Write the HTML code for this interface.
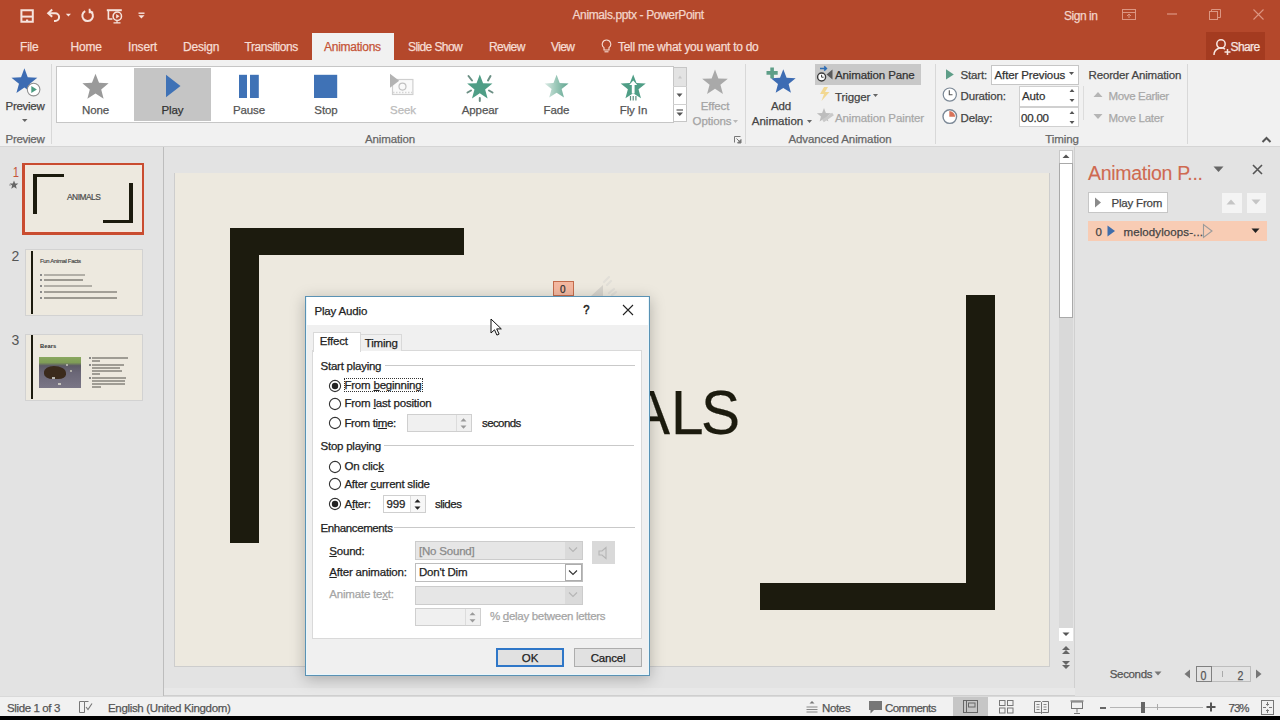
<!DOCTYPE html>
<html><head><meta charset="utf-8">
<style>
*{margin:0;padding:0;box-sizing:border-box}
html,body{width:1280px;height:720px;overflow:hidden;background:#e3e3e3;font-family:"Liberation Sans",sans-serif;position:relative}
.a{position:absolute;display:block}
.t{position:absolute;white-space:nowrap;line-height:1;-webkit-text-stroke:0.25px currentColor}
</style></head><body>
<div class="a" style="left:0px;top:0px;width:1280px;height:60px;background:#b4482b;"></div>
<svg class="a" style="left:19px;top:8px;" width="17" height="16" viewBox="0 0 17 16"><path d="M2.4 2.2h11.4v11.6h-11.4z" fill="none" stroke="#f6e3dd" stroke-width="2"/><path d="M2.4 8.6h11.4" stroke="#f6e3dd" stroke-width="2"/><path d="M7 11.5h2.2v2.3h-2.2z" fill="#f6e3dd"/></svg>
<svg class="a" style="left:46px;top:8px;" width="16" height="15" viewBox="0 0 16 15"><path d="M3 5.2h6.2a3.9 3.9 0 0 1 0 7.8h-1.2" fill="none" stroke="#f6e3dd" stroke-width="2"/><path d="M6.2 1.6l-4 3.6 4 3.6" fill="none" stroke="#f6e3dd" stroke-width="2"/></svg>
<svg class="a" style="left:65px;top:13px;" width="7" height="4" viewBox="0 0 7 4"><path d="M0.8 0.8h5.2l-2.6 2.8z" fill="#f6e3dd"/></svg>
<svg class="a" style="left:80px;top:8px;" width="15" height="15" viewBox="0 0 15 15"><path d="M5.2 3.1a5.3 5.3 0 1 0 4.4 -0.2" fill="none" stroke="#f6e3dd" stroke-width="2"/><path d="M9.6 0.8v3.6h3.6" fill="none" stroke="#f6e3dd" stroke-width="1.8"/></svg>
<svg class="a" style="left:106px;top:8px;" width="17" height="16" viewBox="0 0 17 16"><path d="M0.8 2.2h15" stroke="#f6e3dd" stroke-width="2"/><path d="M2.4 3v8h4" fill="none" stroke="#f6e3dd" stroke-width="1.6"/><circle cx="11.3" cy="8.2" r="4.2" fill="none" stroke="#f6e3dd" stroke-width="1.5"/><path d="M10.2 6v4.4l3.3-2.2z" fill="#f6e3dd"/><path d="M7.5 14.8h7M11 12.5v2" stroke="#f6e3dd" stroke-width="1.2"/></svg>
<svg class="a" style="left:138px;top:12px;" width="7" height="8" viewBox="0 0 7 8"><path d="M0.5 1.2h6" stroke="#f6e3dd" stroke-width="1.4"/><path d="M0.3 3.2h6.2l-3.1 3.2z" fill="#f6e3dd"/></svg>
<div class="t " style="left:572.5px;top:9.44px;font-size:12px;color:#f3d5ca;letter-spacing:-0.38px;">Animals.pptx - PowerPoint</div>
<div class="t " style="left:1064px;top:9.54px;font-size:12px;color:#f3d5ca;letter-spacing:-0.45px;">Sign in</div>
<svg class="a" style="left:1122px;top:9px;" width="14" height="11" viewBox="0 0 14 11"><rect x="0.5" y="0.5" width="13" height="10" fill="none" stroke="#dc9682"/><path d="M0.5 3.5h13" stroke="#dc9682"/><path d="M7 9V5M5 7l2-2 2 2" fill="none" stroke="#dc9682"/></svg>
<svg class="a" style="left:1167px;top:13px;" width="10" height="2" viewBox="0 0 10 2"><path d="M0 1h10" stroke="#dc9682" stroke-width="1.2"/></svg>
<svg class="a" style="left:1209px;top:9px;" width="12" height="11" viewBox="0 0 12 11"><rect x="0.5" y="2.5" width="8" height="8" fill="none" stroke="#dc9682"/><path d="M2.5 2.5v-2h9v8h-3" fill="none" stroke="#dc9682"/></svg>
<svg class="a" style="left:1253px;top:9px;" width="11" height="11" viewBox="0 0 11 11"><path d="M0.5 0.5l10 10M10.5 0.5l-10 10" stroke="#dc9682" stroke-width="1.1"/></svg>
<div class="t " style="left:20px;top:41.44px;font-size:12px;color:#f6ddd4;letter-spacing:-0.2px;">File</div>
<div class="t " style="left:70.5px;top:41.44px;font-size:12px;color:#f6ddd4;letter-spacing:-0.2px;">Home</div>
<div class="t " style="left:128px;top:41.44px;font-size:12px;color:#f6ddd4;letter-spacing:-0.2px;">Insert</div>
<div class="t " style="left:183px;top:41.44px;font-size:12px;color:#f6ddd4;letter-spacing:-0.2px;">Design</div>
<div class="t " style="left:244.5px;top:41.44px;font-size:12px;color:#f6ddd4;letter-spacing:-0.45px;">Transitions</div>
<div class="a" style="left:312px;top:33px;width:82px;height:28px;background:#f1f1f1;"></div>
<div class="t " style="left:324px;top:41.44px;font-size:12px;color:#c55336;letter-spacing:-0.25px;">Animations</div>
<div class="t " style="left:408px;top:41.44px;font-size:12px;color:#f6ddd4;letter-spacing:-0.6px;">Slide Show</div>
<div class="t " style="left:489px;top:41.44px;font-size:12px;color:#f6ddd4;letter-spacing:-0.6px;">Review</div>
<div class="t " style="left:551px;top:41.44px;font-size:12px;color:#f6ddd4;letter-spacing:-0.6px;">View</div>
<svg class="a" style="left:601px;top:39px;" width="11" height="14" viewBox="0 0 11 14"><path d="M5.5 1a4.2 4.2 0 0 0 -2.5 7.6v2.4h5v-2.4a4.2 4.2 0 0 0 -2.5 -7.6z" fill="none" stroke="#f6ddd4" stroke-width="1.1"/><path d="M3.5 12.8h4" stroke="#f6ddd4" stroke-width="1.1"/></svg>
<div class="t " style="left:618px;top:41.44px;font-size:12px;color:#f6ddd4;letter-spacing:-0.28px;">Tell me what you want to do</div>
<div class="a" style="left:1206px;top:32px;width:59px;height:28px;background:#a43b20;"></div>
<svg class="a" style="left:1213px;top:38px;" width="19" height="18" viewBox="0 0 19 18"><circle cx="8" cy="6" r="4.2" fill="none" stroke="#f7e6e0" stroke-width="1.5"/><path d="M1 17a7 7 0 0 1 11-5.8" fill="none" stroke="#f7e6e0" stroke-width="1.5"/><path d="M14.5 11v6M11.5 14h6" stroke="#f7e6e0" stroke-width="1.5"/></svg>
<div class="t " style="left:1230.5px;top:41.44px;font-size:12px;color:#f7e6e0;letter-spacing:-0.6px;">Share</div>
<div class="a" style="left:0px;top:60px;width:1280px;height:87px;background:#f1f1f1;"></div>
<div class="a" style="left:0px;top:146px;width:1280px;height:1px;background:#d5d5d5;"></div>
<div class="a" style="left:51px;top:64px;width:1px;height:80px;background:#d8d8d8;"></div>
<div class="a" style="left:745px;top:64px;width:1px;height:80px;background:#d8d8d8;"></div>
<div class="a" style="left:935px;top:64px;width:1px;height:80px;background:#d8d8d8;"></div>
<div class="a" style="left:1187px;top:64px;width:1px;height:80px;background:#d8d8d8;"></div>
<div class="a" style="left:1083px;top:86px;width:1px;height:34px;background:#dcdcdc;"></div>
<svg class="a" style="left:8px;top:66px;" width="45" height="34" viewBox="0 0 45 34"><polygon points="16.40,2.30 19.75,11.29 29.33,11.70 21.82,17.66 24.39,26.90 16.40,21.60 8.41,26.90 10.98,17.66 3.47,11.70 13.05,11.29" fill="#3d6cb3"/><circle cx="25.6" cy="23.599999999999994" r="6.3" fill="#fff" stroke="#8f8f8f" stroke-width="1.1"/><path d="M23.3 20.099999999999994v7l5.6-3.5z" fill="#4b9b80"/></svg>
<div class="t" style="left:-75px;width:200px;text-align:center;top:101.47px;font-size:11.5px;color:#444;letter-spacing:-0.3px;">Preview</div>
<svg class="a" style="left:22px;top:119px;" width="6" height="4" viewBox="0 0 6 4"><path d="M0 0h5.5l-2.75 3z" fill="#666"/></svg>
<div class="t" style="left:-75px;width:200px;text-align:center;top:133.97px;font-size:11.5px;color:#666;letter-spacing:-0.3px;">Preview</div>
<div class="a" style="left:56px;top:66px;width:618px;height:57px;background:#fff;border:1px solid #c6c6c6;border-right:none"></div>
<div class="a" style="left:134px;top:68px;width:77px;height:53px;background:#c5c5c5;"></div>
<div class="t" style="left:-4.5px;width:200px;text-align:center;top:105.27px;font-size:11.5px;color:#555;letter-spacing:-0.1px;">None</div>
<div class="t" style="left:72.5px;width:200px;text-align:center;top:105.27px;font-size:11.5px;color:#333;letter-spacing:-0.1px;">Play</div>
<div class="t" style="left:149px;width:200px;text-align:center;top:105.27px;font-size:11.5px;color:#555;letter-spacing:-0.1px;">Pause</div>
<div class="t" style="left:226px;width:200px;text-align:center;top:105.27px;font-size:11.5px;color:#555;letter-spacing:-0.1px;">Stop</div>
<div class="t" style="left:303px;width:200px;text-align:center;top:105.27px;font-size:11.5px;color:#bbb;letter-spacing:-0.1px;">Seek</div>
<div class="t" style="left:380px;width:200px;text-align:center;top:105.27px;font-size:11.5px;color:#555;letter-spacing:-0.1px;">Appear</div>
<div class="t" style="left:456.5px;width:200px;text-align:center;top:105.27px;font-size:11.5px;color:#555;letter-spacing:-0.1px;">Fade</div>
<div class="t" style="left:533.5px;width:200px;text-align:center;top:105.27px;font-size:11.5px;color:#555;letter-spacing:-0.1px;">Fly In</div>
<svg class="a" style="left:80px;top:72px;" width="32" height="30" viewBox="0 0 32 30"><polygon points="15.50,1.80 19.03,10.75 28.62,11.34 21.21,17.45 23.61,26.76 15.50,21.60 7.39,26.76 9.79,17.45 2.38,11.34 11.97,10.75" fill="#9a9a9a"/></svg>
<svg class="a" style="left:162px;top:72px;" width="20" height="30" viewBox="0 0 20 30"><path d="M4 2.8v22.5l14.5-11.25z" fill="#3f72b6"/></svg>
<svg class="a" style="left:237px;top:73px;" width="24" height="27" viewBox="0 0 24 27"><rect x="2" y="1.8" width="8" height="23.2" fill="#3f72b6"/><rect x="13" y="1.8" width="8.8" height="23.2" fill="#3f72b6"/></svg>
<svg class="a" style="left:312px;top:73px;" width="28" height="27" viewBox="0 0 28 27"><rect x="2" y="1.8" width="23.2" height="23.2" fill="#3f72b6"/></svg>
<svg class="a" style="left:388px;top:72px;" width="28" height="25" viewBox="0 0 28 25"><rect x="4.5" y="7.5" width="20.4" height="15" fill="#fafafa" stroke="#cfcfcf" stroke-width="1.2"/><circle cx="14.5" cy="14.6" r="3.5" fill="none" stroke="#c2c2c2" stroke-width="1.2"/><path d="M5 20.5h19" stroke="#d5d5d5" stroke-width="1.5" stroke-dasharray="1.5 1.5"/><path d="M2 1.7v14.1l9.2-7z" fill="#b3b3b3"/></svg>
<svg class="a" style="left:462px;top:71px;" width="36" height="32" viewBox="0 0 36 32"><polygon points="17.80,3.40 21.09,12.17 30.45,12.59 23.13,18.43 25.62,27.46 17.80,22.30 9.98,27.46 12.47,18.43 5.15,12.59 14.51,12.17" fill="#4f9e86"/><g stroke="#6b8f84" stroke-width="2" stroke-linecap="round"><path d="M6.5 5l3.5 4.5M28.5 5l-2.5 4.5M5.5 21.5l3.5-2M30.5 21.5l-3.5-2M17.8 27v3"/></g></svg>
<svg class="a" style="left:540px;top:71px" width="34" height="31" viewBox="0 0 34 31"><defs><linearGradient id="fg" x1="0" x2="1" y1="0" y2="0"><stop offset="0" stop-color="#dbeae5"/><stop offset="0.45" stop-color="#9fcabb"/><stop offset="1" stop-color="#5ea48f"/></linearGradient></defs><polygon points="16.60,3.80 19.72,12.11 28.58,12.51 21.64,18.04 24.01,26.59 16.60,21.70 9.19,26.59 11.56,18.04 4.62,12.51 13.48,12.11" fill="url(#fg)"/></svg>
<svg class="a" style="left:617px;top:71px;" width="32" height="32" viewBox="0 0 32 32"><polygon points="16.20,3.40 19.49,12.07 28.75,12.52 21.53,18.33 23.96,27.28 16.20,22.20 8.44,27.28 10.87,18.33 3.65,12.52 12.91,12.07" fill="#4f9e86"/><path d="M16.2 9.5l-4 4.5h2.6v8.5h2.8v-8.5h2.6z" fill="#fff"/><g stroke="#5d8f80" stroke-width="1.2"><path d="M13.5 25v4.5M16.2 25v4.5M18.9 25v4.5"/></g></svg>
<div class="a" style="left:673px;top:67px;width:14px;height:55px;background:#fff;border:1px solid #c6c6c6"></div>
<div class="a" style="left:674px;top:68px;width:12px;height:18px;background:#e3e3e3;"></div>
<div class="a" style="left:673px;top:86px;width:14px;height:1px;background:#d0d0d0;"></div>
<div class="a" style="left:673px;top:104px;width:14px;height:1px;background:#d0d0d0;"></div>
<svg class="a" style="left:676px;top:93px;" width="8" height="5" viewBox="0 0 8 5"><path d="M0.5 0.5h6l-3 3.5z" fill="#555"/></svg>
<svg class="a" style="left:676px;top:109px;" width="8" height="8" viewBox="0 0 8 8"><path d="M0.5 1h6.5" stroke="#555" stroke-width="1.2"/><path d="M0.5 3.5h6.5l-3.25 3.5z" fill="#555"/></svg>
<svg class="a" style="left:678px;top:75px;" width="5" height="4" viewBox="0 0 5 4"><path d="M0 3.5h4l-2-3z" fill="#c8c8c8"/></svg>
<div class="t" style="left:290px;width:200px;text-align:center;top:134.27px;font-size:11.5px;color:#666;letter-spacing:-0.1px;">Animation</div>
<svg class="a" style="left:734px;top:136px;" width="8" height="8" viewBox="0 0 8 8"><path d="M0.5 6.5v-6h6" fill="none" stroke="#777"/><path d="M2.5 2.5l4.5 4.5M7 3.5v3.5h-3.5z" stroke="#777" fill="#777" stroke-width="1"/></svg>
<svg class="a" style="left:700px;top:68px;" width="30" height="28" viewBox="0 0 30 28"><polygon points="15.00,1.50 18.35,10.39 27.84,10.83 20.42,16.76 22.94,25.92 15.00,20.70 7.06,25.92 9.58,16.76 2.16,10.83 11.65,10.39" fill="#a9a9a9"/></svg>
<div class="t" style="left:615px;width:200px;text-align:center;top:101.27px;font-size:11.5px;color:#a3a3a3;letter-spacing:-0.1px;">Effect</div>
<div class="t" style="left:612px;width:200px;text-align:center;top:116.27px;font-size:11.5px;color:#a3a3a3;letter-spacing:-0.1px;">Options</div>
<svg class="a" style="left:733px;top:120px;" width="6" height="4" viewBox="0 0 6 4"><path d="M0 0h5l-2.5 3z" fill="#b9b9b9"/></svg>
<svg class="a" style="left:764px;top:66px;" width="34" height="30" viewBox="0 0 34 30"><polygon points="19.30,3.30 22.59,11.77 31.66,12.28 24.63,18.03 26.94,26.82 19.30,21.90 11.66,26.82 13.97,18.03 6.94,12.28 16.01,11.77" fill="#3d6cb3"/><path d="M8.100000000000023 1.5v10.8M2.5 6.900000000000006h11.2" stroke="#5e9e88" stroke-width="3.6"/></svg>
<div class="t" style="left:681px;width:200px;text-align:center;top:101.27px;font-size:11.5px;color:#444;letter-spacing:-0.1px;">Add</div>
<div class="t" style="left:677.5px;width:200px;text-align:center;top:116.27px;font-size:11.5px;color:#444;letter-spacing:0.05px;">Animation</div>
<svg class="a" style="left:807px;top:120px;" width="6" height="4" viewBox="0 0 6 4"><path d="M0 0h5l-2.5 3z" fill="#666"/></svg>
<div class="a" style="left:815px;top:64px;width:106px;height:21px;background:#c8c8c8;"></div>
<svg class="a" style="left:815px;top:64px;" width="20" height="20" viewBox="0 0 20 20"><path d="M5 4.5h6M9.2 2.4l2.2 2.1-2.2 2.1" fill="none" stroke="#2e6db4" stroke-width="1.5"/><circle cx="6.6" cy="13" r="4" fill="#fff" stroke="#3a3a3a" stroke-width="1.4"/><path d="M6.6 10.8v2.4h2" fill="none" stroke="#3a3a3a" stroke-width="1"/><path d="M17.5 5.5v10l-6-5z" fill="#5a5a5a"/></svg>
<div class="t " style="left:835px;top:69.77px;font-size:11.5px;color:#333;letter-spacing:-0.12px;">Animation Pane</div>
<svg class="a" style="left:818px;top:86px;" width="14" height="16" viewBox="0 0 14 16"><path d="M6 1l-4 7h4l-2.5 7 8-9h-4.5l3-5z" fill="#f2d27a" opacity="0.8"/></svg>
<div class="t " style="left:835px;top:91.77px;font-size:11.5px;color:#444;letter-spacing:-0.1px;">Trigger</div>
<svg class="a" style="left:873px;top:94px;" width="6" height="4" viewBox="0 0 6 4"><path d="M0 0h5l-2.5 3z" fill="#666"/></svg>
<svg class="a" style="left:816px;top:107px;" width="18" height="17" viewBox="0 0 18 17"><polygon points="8.00,1.00 9.88,5.91 15.13,6.18 11.04,9.49 12.41,14.57 8.00,11.70 3.59,14.57 4.96,9.49 0.87,6.18 6.12,5.91" fill="#bdbdbd"/><path d="M7 14l10-7" stroke="#c9c9c9" stroke-width="3"/></svg>
<div class="t " style="left:835px;top:112.97px;font-size:11.5px;color:#a8a8a8;letter-spacing:-0.1px;">Animation Painter</div>
<div class="t" style="left:740px;width:200px;text-align:center;top:134.27px;font-size:11.5px;color:#666;letter-spacing:-0.1px;">Advanced Animation</div>
<svg class="a" style="left:944px;top:68px;" width="12" height="13" viewBox="0 0 12 13"><path d="M2 1.2v10.4l7.8-5.2z" fill="#5e9e88"/></svg>
<div class="t " style="left:960.5px;top:69.77px;font-size:11.5px;color:#444;letter-spacing:-0.15px;">Start:</div>
<div class="a" style="left:991px;top:64.5px;width:88px;height:20px;background:#fff;border:1px solid #c6c6c6"></div>
<div class="t " style="left:994.5px;top:69.77px;font-size:11.5px;color:#333;letter-spacing:-0.12px;">After Previous</div>
<svg class="a" style="left:1069px;top:72px;" width="6" height="4" viewBox="0 0 6 4"><path d="M0 0h5l-2.5 3z" fill="#555"/></svg>
<svg class="a" style="left:941px;top:86px;" width="18" height="18" viewBox="0 0 18 18"><circle cx="8.8" cy="8.6" r="6.6" fill="#fff" stroke="#7b8896" stroke-width="1.2"/><path d="M8.3 4.2v4.6h3.2" fill="none" stroke="#555" stroke-width="1.1"/></svg>
<div class="t " style="left:960.5px;top:90.67px;font-size:11.5px;color:#444;letter-spacing:-0.15px;">Duration:</div>
<div class="a" style="left:1019px;top:85.5px;width:60px;height:21.5px;background:#fff;border:1px solid #d0d0d0"></div>
<div class="t " style="left:1022px;top:90.67px;font-size:11.5px;color:#333;letter-spacing:-0.1px;">Auto</div>
<svg class="a" style="left:1069px;top:88px;" width="7" height="16" viewBox="0 0 7 16"><path d="M0.5 4h5l-2.5-3z M0.5 11h5l-2.5 3z" fill="#555"/></svg>
<svg class="a" style="left:941px;top:108px;" width="18" height="18" viewBox="0 0 18 18"><circle cx="8.8" cy="8.6" r="6.8" fill="#fff" stroke="#7b8896" stroke-width="1.4"/><path d="M8.3 3v5.8h5.8a5.8 5.8 0 0 0 -5.8 -5.8z" fill="#d8735a"/></svg>
<div class="t " style="left:960.5px;top:112.77px;font-size:11.5px;color:#444;letter-spacing:-0.15px;">Delay:</div>
<div class="a" style="left:1019px;top:106.5px;width:60px;height:20.5px;background:#fff;border:1px solid #d0d0d0"></div>
<div class="t " style="left:1021px;top:112.77px;font-size:11.5px;color:#333;letter-spacing:-0.2px;">00.00</div>
<svg class="a" style="left:1069px;top:110px;" width="7" height="16" viewBox="0 0 7 16"><path d="M0.5 4h5l-2.5-3z M0.5 11h5l-2.5 3z" fill="#555"/></svg>
<div class="t" style="left:962px;width:200px;text-align:center;top:133.77px;font-size:11.5px;color:#666;letter-spacing:-0.1px;">Timing</div>
<div class="t " style="left:1088.5px;top:69.87px;font-size:11.5px;color:#444;letter-spacing:-0.15px;">Reorder Animation</div>
<svg class="a" style="left:1093px;top:91px;" width="10" height="7" viewBox="0 0 10 7"><path d="M0.5 6h9l-4.5-5z" fill="#b5b5b5"/></svg>
<div class="t " style="left:1108.5px;top:91.07px;font-size:11.5px;color:#a8a8a8;letter-spacing:-0.35px;">Move Earlier</div>
<svg class="a" style="left:1093px;top:113px;" width="10" height="7" viewBox="0 0 10 7"><path d="M0.5 1h9l-4.5 5z" fill="#b5b5b5"/></svg>
<div class="t " style="left:1108.5px;top:112.57px;font-size:11.5px;color:#a8a8a8;letter-spacing:-0.25px;">Move Later</div>
<svg class="a" style="left:1261px;top:135px;" width="11" height="9" viewBox="0 0 11 9"><path d="M1.5 7l4-4 4 4" fill="none" stroke="#555" stroke-width="2"/></svg>
<div class="a" style="left:0px;top:147px;width:1280px;height:550px;background:#e3e3e3;"></div>
<div class="a" style="left:163px;top:147px;width:1px;height:550px;background:#bdbdbd;"></div>
<div class="a" style="left:164px;top:688px;width:911px;height:8px;background:#e8e8e8;border-bottom:1px solid #cfcfcf"></div>
<div class="a" style="left:1074px;top:147px;width:1px;height:541px;background:#d0d0d0;"></div>
<div class="a" style="left:174px;top:173px;width:876px;height:494px;background:#cdcdcd;"></div>
<div class="a" style="left:175px;top:173px;width:874px;height:493px;background:#ede9df;"></div>
<div class="a" style="left:229.7px;top:227.6px;width:234px;height:27px;background:#1c1b0e;"></div>
<div class="a" style="left:229.7px;top:227.6px;width:28.9px;height:315.3px;background:#1c1b0e;"></div>
<div class="a" style="left:965.6px;top:295.1px;width:29.3px;height:315.3px;background:#1c1b0e;"></div>
<div class="a" style="left:759.8px;top:583px;width:235.1px;height:27.4px;background:#1c1b0e;"></div>
<div class="t" style="left:630.7px;top:381px;font-size:63px;color:#1c1b0e;transform:scaleX(0.93);transform-origin:0 0">A</div>
<div class="t" style="left:671px;top:381px;font-size:63px;color:#1c1b0e;transform:scaleX(0.93);transform-origin:0 0">L</div>
<div class="t" style="left:700.8px;top:381px;font-size:63px;color:#1c1b0e;transform:scaleX(0.93);transform-origin:0 0">S</div>
<div class="a" style="left:553px;top:281px;width:21px;height:15px;background:#f4b8a0;border:1px solid #c46c4c"></div>
<div class="t " style="left:560px;top:284.54px;font-size:10px;color:#333;">0</div>
<svg class="a" style="left:588px;top:276px;" width="38" height="21" viewBox="0 0 38 21"><path d="M3 20l12-11v11z" fill="#d6d3cc"/><path d="M16 6l5-5M19 9l4-4M21 17l5-4M24 19l4-3" stroke="#e2dfd8" stroke-width="2.2" stroke-linecap="round"/></svg>
<div class="a" style="left:1059px;top:150px;width:14px;height:14px;background:#fff;border:1px solid #c8c8c8"></div>
<svg class="a" style="left:1062px;top:154px;" width="8" height="5" viewBox="0 0 8 5"><path d="M0.5 4h7l-3.5-3.5z" fill="#555"/></svg>
<div class="a" style="left:1059px;top:164px;width:14px;height:465px;background:#d9d9d9;"></div>
<div class="a" style="left:1059px;top:163px;width:14px;height:155px;background:#fff;border:1px solid #a9a9a9"></div>
<div class="a" style="left:1059px;top:628px;width:14px;height:13px;background:#fff;"></div>
<svg class="a" style="left:1062px;top:632px;" width="8" height="5" viewBox="0 0 8 5"><path d="M0.5 0.5h7l-3.5 3.5z" fill="#555"/></svg>
<svg class="a" style="left:1061px;top:645px;" width="10" height="10" viewBox="0 0 10 10"><path d="M1 5l4-4 4 4zM1 9l4-4 4 4z" fill="#666"/></svg>
<svg class="a" style="left:1061px;top:660px;" width="10" height="10" viewBox="0 0 10 10"><path d="M1 1l4 4 4-4zM1 5l4 4 4-4z" fill="#666"/></svg>
<div class="t " style="left:12px;top:164.75px;font-size:14px;color:#c5533a;transform:scaleX(0.8);-webkit-text-stroke:0">1</div>
<svg class="a" style="left:9px;top:180px;" width="10" height="10" viewBox="0 0 10 10"><polygon points="5.00,0.40 6.18,3.38 9.37,3.58 6.90,5.62 7.70,8.72 5.00,7.00 2.30,8.72 3.10,5.62 0.63,3.58 3.82,3.38" fill="#666"/><path d="M0 5h2" stroke="#999"/></svg>
<div class="a" style="left:22px;top:162.5px;width:122px;height:72px;background:#c94c30;"></div>
<div class="a" style="left:24.5px;top:165px;width:117px;height:67px;background:#ede9df;border:1px solid #f7e5dc"></div>
<div class="a" style="left:33px;top:173.8px;width:30.8px;height:3.5px;background:#1c1b0e;"></div>
<div class="a" style="left:33px;top:173.8px;width:4.3px;height:40.2px;background:#1c1b0e;"></div>
<div class="a" style="left:103px;top:219.8px;width:30px;height:3.3px;background:#1c1b0e;"></div>
<div class="a" style="left:129px;top:182.5px;width:4px;height:40.5px;background:#1c1b0e;"></div>
<div class="t " style="left:67px;top:193.49px;font-size:8.4px;color:#4a4a4a;letter-spacing:-0.5px;-webkit-text-stroke:0.2px #4a4a4a">ANIMALS</div>
<div class="t " style="left:11.5px;top:248.65px;font-size:14px;color:#555;-webkit-text-stroke:0">2</div>
<div class="a" style="left:24.5px;top:249.3px;width:118px;height:66.5px;background:#d2d2d2;"></div>
<div class="a" style="left:25.5px;top:250.3px;width:116px;height:64.5px;background:#ede9df;"></div>
<div class="a" style="left:30.6px;top:251px;width:2.2px;height:63.4px;background:#1c1b0e;"></div>
<div class="t " style="left:40px;top:257.92px;font-size:6px;color:#444;letter-spacing:-0.35px;-webkit-text-stroke:0.15px #444">Fun Animal Facts</div>
<div class="a" style="left:40px;top:274px;width:2px;height:2px;background:#8a8a8a;"></div>
<div class="a" style="left:43.5px;top:274px;width:41.5px;height:2px;background:#b2afa7;"></div>
<div class="a" style="left:40px;top:279px;width:2px;height:2px;background:#8a8a8a;"></div>
<div class="a" style="left:43.5px;top:279px;width:39.5px;height:2px;background:#9c9991;"></div>
<div class="a" style="left:40px;top:285px;width:2px;height:2px;background:#8a8a8a;"></div>
<div class="a" style="left:43.5px;top:285px;width:48.5px;height:2px;background:#b2afa7;"></div>
<div class="a" style="left:40px;top:291px;width:2px;height:2px;background:#8a8a8a;"></div>
<div class="a" style="left:43.5px;top:291px;width:73.5px;height:2px;background:#a29f97;"></div>
<div class="a" style="left:40px;top:297px;width:2px;height:2px;background:#8a8a8a;"></div>
<div class="a" style="left:43.5px;top:297px;width:73.5px;height:2px;background:#9c9991;"></div>
<div class="t " style="left:11.5px;top:333.15px;font-size:14px;color:#555;-webkit-text-stroke:0">3</div>
<div class="a" style="left:24.5px;top:333.5px;width:118px;height:67px;background:#d2d2d2;"></div>
<div class="a" style="left:25.5px;top:334.5px;width:116px;height:65px;background:#ede9df;"></div>
<div class="a" style="left:30.6px;top:335px;width:2.2px;height:63.8px;background:#1c1b0e;"></div>
<div class="t " style="left:40px;top:343.59px;font-size:5.8px;color:#333;font-weight:bold;-webkit-text-stroke:0">Bears</div>
<div class="a" style="left:38.8px;top:357px;width:41.8px;height:31px;background:linear-gradient(180deg,#8aa860 0%,#7f9c56 18%,#5d5a66 28%,#6a6676 50%,#7a7686 100%)"></div>
<div class="a" style="left:44px;top:366px;width:22px;height:13px;background:#3b2a1c;border-radius:45% 55% 35% 40%"></div>
<div class="a" style="left:52px;top:377px;width:3px;height:2px;background:#b8b6b0;"></div>
<div class="a" style="left:58px;top:383px;width:3px;height:2px;background:#c6c4be;"></div>
<div class="a" style="left:70px;top:370px;width:2px;height:2px;background:#b0aea8;"></div>
<div class="a" style="left:66px;top:364px;width:2px;height:2px;background:#b0aea8;"></div>
<div class="a" style="left:89px;top:357px;width:2px;height:2px;background:#888;"></div>
<div class="a" style="left:89px;top:364px;width:2px;height:2px;background:#888;"></div>
<div class="a" style="left:89px;top:377px;width:2px;height:2px;background:#888;"></div>
<div class="a" style="left:92px;top:357px;width:36px;height:2px;background:#9f9c94;"></div>
<div class="a" style="left:92px;top:360px;width:8px;height:2px;background:#9f9c94;"></div>
<div class="a" style="left:92px;top:364px;width:32px;height:2px;background:#9f9c94;"></div>
<div class="a" style="left:92px;top:367px;width:28px;height:2px;background:#9f9c94;"></div>
<div class="a" style="left:92px;top:370px;width:30px;height:2px;background:#9f9c94;"></div>
<div class="a" style="left:92px;top:373px;width:8px;height:2px;background:#9f9c94;"></div>
<div class="a" style="left:92px;top:377px;width:34px;height:2px;background:#9f9c94;"></div>
<div class="a" style="left:92px;top:380px;width:33px;height:2px;background:#9f9c94;"></div>
<div class="a" style="left:92px;top:383px;width:33px;height:2px;background:#9f9c94;"></div>
<div class="a" style="left:92px;top:386px;width:9px;height:2px;background:#9f9c94;"></div>
<div class="a" style="left:305px;top:296px;width:345px;height:380px;background:#f0f0f0;border:1px solid #5a92b4;box-shadow:0 3px 14px rgba(0,0,0,0.25),inset 0 0 0 1px #e8f6fc"></div>
<div class="a" style="left:307px;top:297px;width:341px;height:28px;background:#fff;"></div>
<div class="t " style="left:314.4px;top:305.67px;font-size:11.5px;color:#222;letter-spacing:-0.15px;">Play Audio</div>
<div class="t " style="left:583.3px;top:303.62px;font-size:12.5px;color:#222;transform:scaleX(0.9);-webkit-text-stroke:0.5px #222">?</div>
<svg class="a" style="left:622px;top:304px;" width="12" height="12" viewBox="0 0 12 12"><path d="M1 1l10 10M11 1l-10 10" stroke="#222" stroke-width="1.1"/></svg>
<div class="a" style="left:312px;top:350px;width:330px;height:289px;background:#fff;border:1px solid #d9d9d9"></div>
<div class="a" style="left:360px;top:333.5px;width:41.5px;height:17.5px;background:#f0f0f0;border:1px solid #d9d9d9;border-bottom:none"></div>
<div class="a" style="left:312.5px;top:331.5px;width:48px;height:20px;background:#fff;border:1px solid #d9d9d9;border-bottom:none"></div>
<div class="t " style="left:319.8px;top:335.67px;font-size:11.5px;color:#222;letter-spacing:-0.2px;">Effect</div>
<div class="t " style="left:364.8px;top:337.57px;font-size:11.5px;color:#222;letter-spacing:-0.2px;">Timing</div>
<div class="t " style="left:320.6px;top:360.67px;font-size:11.5px;color:#222;letter-spacing:-0.25px;">Start playing</div>
<div class="a" style="left:384.5px;top:365px;width:250px;height:1px;background:#c9c9c9;"></div>
<div class="t " style="left:320.6px;top:441.27px;font-size:11.5px;color:#222;letter-spacing:-0.25px;">Stop playing</div>
<div class="a" style="left:384px;top:445px;width:250px;height:1px;background:#c9c9c9;"></div>
<div class="t " style="left:320.6px;top:522.77px;font-size:11.5px;color:#222;letter-spacing:-0.4px;">Enhancements</div>
<div class="a" style="left:393.5px;top:527px;width:241px;height:1px;background:#c9c9c9;"></div>
<svg class="a" style="left:328px;top:378.8px;" width="14" height="14" viewBox="0 0 14 14"><circle cx="7" cy="7" r="5.6" fill="#fff" stroke="#333" stroke-width="1.1"/><circle cx="7" cy="7" r="3.2" fill="#222"/></svg>
<div class="t " style="left:344.4px;top:380.17px;font-size:11.5px;color:#222;letter-spacing:-0.2px;">From <u>b</u>eginning</div>
<div class="a" style="left:343.5px;top:378.2px;width:79.5px;height:13.5px;background:none;border:1px dotted #333"></div>
<svg class="a" style="left:328px;top:396.5px;" width="14" height="14" viewBox="0 0 14 14"><circle cx="7" cy="7" r="5.6" fill="#fff" stroke="#333" stroke-width="1.1"/></svg>
<div class="t " style="left:344.4px;top:398.27px;font-size:11.5px;color:#222;letter-spacing:-0.2px;">From <u>l</u>ast position</div>
<svg class="a" style="left:328px;top:416.3px;" width="14" height="14" viewBox="0 0 14 14"><circle cx="7" cy="7" r="5.6" fill="#fff" stroke="#333" stroke-width="1.1"/></svg>
<div class="t " style="left:344.4px;top:417.97px;font-size:11.5px;color:#222;letter-spacing:-0.35px;">From ti<u>m</u>e:</div>
<div class="t " style="left:482px;top:417.97px;font-size:11.5px;color:#222;letter-spacing:-0.6px;">seconds</div>
<div class="a" style="left:407px;top:414.3px;width:65.39999999999998px;height:17.899999999999977px;background:#f0f0f0;border:1px solid #cfcfcf"></div>
<div class="a" style="left:456.4px;top:415.3px;width:15px;height:15.899999999999977px;background:#f0f0f0;border-left:1px solid #dcdcdc"></div>
<svg class="a" style="left:460.4px;top:416.3px;" width="8" height="13.899999999999977" viewBox="0 0 8 13.899999999999977"><path d="M0.5 5.449999999999989h6l-3-3.2z M0.5 9.449999999999989h6l-3 3.2z" fill="#9a9a9a"/></svg>
<svg class="a" style="left:328px;top:459.7px;" width="14" height="14" viewBox="0 0 14 14"><circle cx="7" cy="7" r="5.6" fill="#fff" stroke="#333" stroke-width="1.1"/></svg>
<div class="t " style="left:344.4px;top:461.37px;font-size:11.5px;color:#222;letter-spacing:-0.2px;">On clic<u>k</u></div>
<svg class="a" style="left:328px;top:477.2px;" width="14" height="14" viewBox="0 0 14 14"><circle cx="7" cy="7" r="5.6" fill="#fff" stroke="#333" stroke-width="1.1"/></svg>
<div class="t " style="left:344.4px;top:478.97px;font-size:11.5px;color:#222;letter-spacing:-0.25px;">After <u>c</u>urrent slide</div>
<svg class="a" style="left:328px;top:497px;" width="14" height="14" viewBox="0 0 14 14"><circle cx="7" cy="7" r="5.6" fill="#fff" stroke="#333" stroke-width="1.1"/><circle cx="7" cy="7" r="3.2" fill="#222"/></svg>
<div class="t " style="left:344.4px;top:498.67px;font-size:11.5px;color:#222;letter-spacing:-0.2px;">A<u>f</u>ter:</div>
<div class="a" style="left:382.5px;top:494.5px;width:43.89999999999998px;height:18.100000000000023px;background:#fff;border:1px solid #cfcfcf"></div>
<div class="a" style="left:410.4px;top:495.5px;width:15px;height:16.100000000000023px;background:#f7f7f7;border-left:1px solid #dcdcdc"></div>
<svg class="a" style="left:414.4px;top:496.5px;" width="8" height="14.100000000000023" viewBox="0 0 8 14.100000000000023"><path d="M0.5 5.550000000000011h6l-3-3.2z M0.5 9.550000000000011h6l-3 3.2z" fill="#222"/></svg>
<div class="t " style="left:386.5px;top:498.87px;font-size:11.5px;color:#222;letter-spacing:-0.2px;">999</div>
<div class="t " style="left:435px;top:498.67px;font-size:11.5px;color:#222;letter-spacing:-0.5px;">slides</div>
<div class="t " style="left:329.3px;top:545.57px;font-size:11.5px;color:#222;letter-spacing:-0.2px;"><u>S</u>ound:</div>
<div class="a" style="left:415px;top:540.7px;width:167.5px;height:19px;background:#e6e6e6;border:1px solid #cccccc"></div>
<div class="a" style="left:565px;top:541.7px;width:16.5px;height:17px;background:#dadada;"></div>
<svg class="a" style="left:568px;top:546px;" width="10" height="7" viewBox="0 0 10 7"><path d="M1 1.5l4 4 4-4" fill="none" stroke="#b5b5b5" stroke-width="1.1"/></svg>
<div class="t " style="left:419px;top:545.57px;font-size:11.5px;color:#8a8a8a;letter-spacing:-0.2px;">[No Sound]</div>
<div class="a" style="left:592.3px;top:541.4px;width:23.2px;height:22.7px;background:#d9d9d9;"></div>
<svg class="a" style="left:597px;top:546px;" width="14" height="14" viewBox="0 0 14 14"><path d="M2 5h3l4-3.5v11l-4-3.5h-3z" fill="none" stroke="#b5b5b5" stroke-width="1.1"/></svg>
<div class="t " style="left:329.3px;top:567.47px;font-size:11.5px;color:#222;letter-spacing:-0.2px;"><u>A</u>fter animation:</div>
<div class="a" style="left:415px;top:563.4px;width:167.5px;height:18.5px;background:#fff;border:1px solid #bdbdbd"></div>
<div class="a" style="left:565px;top:564.4px;width:16.5px;height:16.5px;background:#fff;border:1px solid #adadad"></div>
<svg class="a" style="left:568px;top:569px;" width="10" height="7" viewBox="0 0 10 7"><path d="M1 1.5l4 4 4-4" fill="none" stroke="#333" stroke-width="1.1"/></svg>
<div class="t " style="left:419px;top:567.47px;font-size:11.5px;color:#222;letter-spacing:-0.2px;">Don't Dim</div>
<div class="t " style="left:329.3px;top:589.47px;font-size:11.5px;color:#a5a5a5;letter-spacing:-0.2px;">Animate te<u>x</u>t:</div>
<div class="a" style="left:415px;top:585.8px;width:167.5px;height:18.8px;background:#e6e6e6;border:1px solid #cccccc"></div>
<div class="a" style="left:565px;top:586.8px;width:16.5px;height:16.8px;background:#dadada;"></div>
<svg class="a" style="left:568px;top:591px;" width="10" height="7" viewBox="0 0 10 7"><path d="M1 1.5l4 4 4-4" fill="none" stroke="#b5b5b5" stroke-width="1.1"/></svg>
<div class="a" style="left:415px;top:608px;width:66.39999999999998px;height:17.700000000000045px;background:#f0f0f0;border:1px solid #cfcfcf"></div>
<div class="a" style="left:465.4px;top:609px;width:15px;height:15.700000000000045px;background:#f0f0f0;border-left:1px solid #dcdcdc"></div>
<svg class="a" style="left:469.4px;top:610px;" width="8" height="13.700000000000045" viewBox="0 0 8 13.700000000000045"><path d="M0.5 5.350000000000023h6l-3-3.2z M0.5 9.350000000000023h6l-3 3.2z" fill="#9a9a9a"/></svg>
<div class="t " style="left:490px;top:611.27px;font-size:11.5px;color:#a5a5a5;letter-spacing:-0.3px;">% <u>d</u>elay between letters</div>
<div class="a" style="left:496px;top:648.4px;width:68px;height:18.6px;background:#e1e1e1;border:2px solid #2f77c8"></div>
<div class="t" style="left:430px;width:200px;text-align:center;top:652.87px;font-size:11.5px;color:#222;">OK</div>
<div class="a" style="left:574px;top:648.4px;width:68px;height:18.6px;background:#e1e1e1;border:1px solid #adadad"></div>
<div class="t" style="left:508px;width:200px;text-align:center;top:652.87px;font-size:11.5px;color:#222;letter-spacing:-0.2px;">Cancel</div>
<svg class="a" style="left:490px;top:318px;" width="12" height="19" viewBox="0 0 12 19"><path d="M1 1v14l3.5-3.2 2.4 5.3 2.2-1-2.4-5.2h4.6z" fill="#fff" stroke="#111" stroke-width="1"/></svg>
<div class="t " style="left:1088px;top:164.09px;font-size:19.5px;color:#cf6a51;letter-spacing:-0.3px;-webkit-text-stroke:0.1px currentColor">Animation P...</div>
<svg class="a" style="left:1213px;top:166px;" width="11" height="7" viewBox="0 0 11 7"><path d="M0.5 0.5h10l-5 5.5z" fill="#666"/></svg>
<svg class="a" style="left:1252px;top:164px;" width="11" height="11" viewBox="0 0 11 11"><path d="M1 1l9 9M10 1l-9 9" stroke="#555" stroke-width="1.6"/></svg>
<div class="a" style="left:1087.5px;top:192.4px;width:80.5px;height:20.5px;background:#fff;border:1px solid #c6c6c6"></div>
<svg class="a" style="left:1094px;top:196px;" width="8" height="13" viewBox="0 0 8 13"><path d="M1 1.5v10l6-5z" fill="#8a8a8a"/></svg>
<div class="t " style="left:1111.5px;top:198.27px;font-size:11.5px;color:#444;letter-spacing:-0.2px;">Play From</div>
<div class="a" style="left:1221.5px;top:192.5px;width:20px;height:20px;background:#f4f4f4;"></div>
<svg class="a" style="left:1226px;top:199px;" width="10" height="6" viewBox="0 0 10 6"><path d="M0.5 5.5h9l-4.5-5z" fill="#c5c5c5"/></svg>
<div class="a" style="left:1246.5px;top:192.5px;width:19.5px;height:20px;background:#f4f4f4;"></div>
<svg class="a" style="left:1251px;top:199px;" width="10" height="6" viewBox="0 0 10 6"><path d="M0.5 0.5h9l-4.5 5z" fill="#c5c5c5"/></svg>
<div class="a" style="left:1087.5px;top:221.3px;width:179px;height:19.5px;background:#f8ccb4;"></div>
<div class="t " style="left:1095.5px;top:226.77px;font-size:11.5px;color:#444;">0</div>
<svg class="a" style="left:1106px;top:224px;" width="10" height="14" viewBox="0 0 10 14"><path d="M1.5 1.5v11l7.5-5.5z" fill="#3f6dab"/></svg>
<div class="t " style="left:1123.5px;top:226.77px;font-size:11.5px;color:#444;letter-spacing:0.1px;">melodyloops-...</div>
<svg class="a" style="left:1202px;top:223px;" width="12" height="16" viewBox="0 0 12 16"><path d="M1.5 1.5v13l8.5-6.5z" fill="none" stroke="#9b9b9b" stroke-width="1.1"/></svg>
<svg class="a" style="left:1251px;top:228px;" width="10" height="6" viewBox="0 0 10 6"><path d="M0.5 0.5h8l-4 4.5z" fill="#222"/></svg>
<div class="t " style="left:1109.8px;top:669.47px;font-size:11.5px;color:#555;letter-spacing:-0.35px;">Seconds</div>
<svg class="a" style="left:1154px;top:671px;" width="8" height="5" viewBox="0 0 8 5"><path d="M0.5 0.5h7l-3.5 4z" fill="#777"/></svg>
<svg class="a" style="left:1184px;top:669px;" width="7" height="11" viewBox="0 0 7 11"><path d="M6 0.5v9l-5.5-4.5z" fill="#777"/></svg>
<div class="a" style="left:1195.5px;top:666.3px;width:55.5px;height:16.2px;background:none;border:1px solid #bdbdbd"></div>
<div class="a" style="left:1195.5px;top:666.3px;width:16.5px;height:16.2px;background:none;border:1px solid #808080"></div>
<div class="t " style="left:1199.5px;top:669.92px;font-size:12.5px;color:#555;transform:scaleX(0.85)">0</div>
<div class="a" style="left:1222px;top:671px;width:1px;height:6px;background:#aaa;"></div>
<div class="t " style="left:1237px;top:669.92px;font-size:12.5px;color:#555;transform:scaleX(0.85)">2</div>
<svg class="a" style="left:1255px;top:669px;" width="7" height="11" viewBox="0 0 7 11"><path d="M1 0.5v9l5.5-4.5z" fill="#777"/></svg>
<div class="a" style="left:0px;top:696px;width:1280px;height:1px;background:#d9d9d9;"></div>
<div class="a" style="left:0px;top:697px;width:1280px;height:19px;background:#f1f1f1;"></div>
<div class="a" style="left:0px;top:716px;width:1280px;height:4px;background:#000;"></div>
<div class="t " style="left:7px;top:702.77px;font-size:11.5px;color:#555;letter-spacing:-0.38px;">Slide 1 of 3</div>
<svg class="a" style="left:78px;top:700px;" width="15" height="14" viewBox="0 0 15 14"><path d="M1.5 1.5h5v11h-5zM6.5 1.5h4" fill="none" stroke="#777" stroke-width="1"/><path d="M8 7l2 2.5 4-6" fill="none" stroke="#777" stroke-width="1.1"/></svg>
<div class="t " style="left:108px;top:702.77px;font-size:11.5px;color:#555;letter-spacing:-0.33px;">English (United Kingdom)</div>
<svg class="a" style="left:806px;top:700px;" width="12" height="14" viewBox="0 0 12 14"><path d="M3.5 3.5l2.5-2.5 2.5 2.5z" fill="#777"/><path d="M0.5 7h11M0.5 9.5h11M0.5 12h11" stroke="#888" stroke-width="1"/></svg>
<div class="t " style="left:822px;top:702.77px;font-size:11.5px;color:#555;letter-spacing:-0.35px;">Notes</div>
<svg class="a" style="left:868px;top:700px;" width="15" height="15" viewBox="0 0 15 15"><path d="M1 1h13v9h-8l-3.5 3.5v-3.5h-1.5z" fill="#777"/></svg>
<div class="t " style="left:885px;top:702.77px;font-size:11.5px;color:#555;letter-spacing:-0.6px;">Comments</div>
<div class="a" style="left:953px;top:697px;width:35px;height:19px;background:#c6c6c6;"></div>
<svg class="a" style="left:963px;top:700px;" width="15" height="13" viewBox="0 0 15 13"><rect x="0.5" y="0.5" width="14" height="12" fill="none" stroke="#666"/><path d="M3.5 0.5v12" stroke="#666"/><rect x="5.5" y="3" width="6.5" height="4" fill="none" stroke="#666"/></svg>
<svg class="a" style="left:999px;top:700px;" width="15" height="14" viewBox="0 0 15 14"><rect x="0.5" y="0.5" width="5.5" height="5" fill="none" stroke="#777"/><rect x="8.5" y="0.5" width="5.5" height="5" fill="none" stroke="#777"/><rect x="0.5" y="8" width="5.5" height="5" fill="none" stroke="#777"/><rect x="8.5" y="8" width="5.5" height="5" fill="none" stroke="#777"/></svg>
<svg class="a" style="left:1034px;top:700px;" width="15" height="15" viewBox="0 0 15 15"><path d="M7.5 2.5v11M0.5 1.5h6l1 1 1-1h6v11h-6l-1 1-1-1h-6z" fill="none" stroke="#777"/><path d="M2.5 4.5h3M2.5 7h3M2.5 9.5h3M9.5 4.5h3M9.5 7h3M9.5 9.5h3" stroke="#888"/></svg>
<svg class="a" style="left:1070px;top:700px;" width="14" height="15" viewBox="0 0 14 15"><path d="M0.5 1h13" stroke="#777" stroke-width="1.2"/><rect x="1.5" y="2" width="11" height="6.5" fill="none" stroke="#777"/><path d="M7 8.5v4M4 13.5h6" stroke="#777"/></svg>
<div class="a" style="left:1100px;top:706.5px;width:6px;height:2px;background:#666;"></div>
<div class="a" style="left:1110px;top:707px;width:93px;height:1px;background:#b5b5b5;"></div>
<div class="a" style="left:1156.5px;top:704px;width:1px;height:6px;background:#aaa;"></div>
<div class="a" style="left:1141px;top:701.7px;width:4px;height:11px;background:#666;"></div>
<svg class="a" style="left:1206px;top:702px;" width="10" height="10" viewBox="0 0 10 10"><path d="M5 0.5v9M0.5 5h9" stroke="#555" stroke-width="2"/></svg>
<div class="t " style="left:1228.5px;top:702.77px;font-size:11.5px;color:#555;letter-spacing:-1px;">73%</div>
<svg class="a" style="left:1261px;top:700px;" width="13" height="15" viewBox="0 0 13 15"><rect x="0.5" y="0.5" width="12" height="14" fill="none" stroke="#777"/><path d="M6.5 2v3M6.5 10v3M2 7.5h3M8 7.5h3M5 4l1.5 1.5 1.5-1.5M5 11l1.5-1.5 1.5 1.5" fill="none" stroke="#777"/></svg>
</body></html>
